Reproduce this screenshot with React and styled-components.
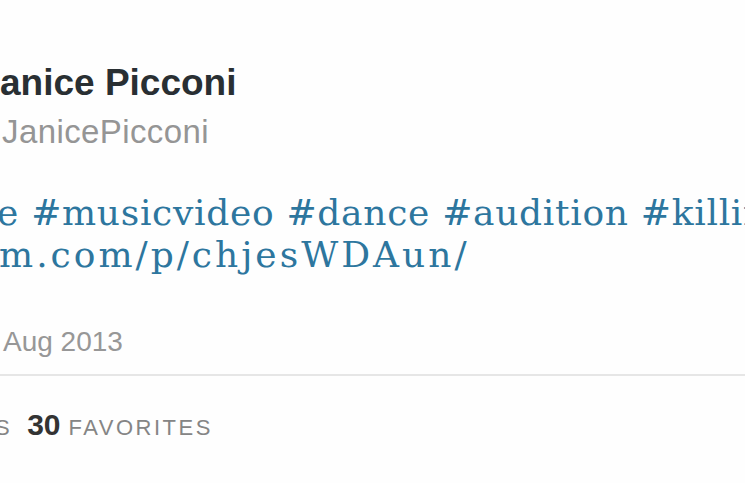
import React from "react";
import styled, { createGlobalStyle } from "styled-components";

const GlobalStyle = createGlobalStyle`
  html, body {
    margin: 0;
    padding: 0;
    background: #fefefe;
    overflow: hidden;
  }
  body {
    width: 745px;
    height: 483px;
  }
`;

const Page = styled.div`
  width: 745px;
  height: 483px;
  overflow: hidden;
  background: #fefefe;
`;

const Card = styled.div`
  margin-left: -20px;
  padding-top: 61px;
  display: flex;
  flex-direction: column;
`;

// one line of the tweet; the clipped part hangs off the left edge
const Line = styled.div`
  display: flex;
  align-items: baseline;
  white-space: nowrap;
  padding-left: ${p => p.$x + 20}px;
  margin-top: ${p => p.$gap || 0}px;
  font-family: ${p => (p.$serif ? '"DejaVu Serif", serif' : '"Liberation Sans", Arial, sans-serif')};
  font-size: ${p => p.$size}px;
  line-height: ${p => p.$lh}px;
  letter-spacing: ${p => p.$ls || 0}px;
  font-weight: ${p => (p.$bold ? 700 : 400)};
  color: ${p => p.$color};
`;

const Hidden = styled.span`
  display: inline-flex;
  justify-content: flex-end;
  width: 0;
`;

const Divider = styled.div`
  height: 2px;
  background: #e6e6e6;
  margin-top: 16px;
  width: 800px;
`;

const Count = styled.b`
  font-size: 30px;
  font-weight: 700;
  color: #333;
  margin-right: 8px;
`;

const Label = styled.span`
  font-size: 22px;
  letter-spacing: 2.5px;
  color: #858585;
  margin-right: ${p => p.$after || 0}px;
`;

const Clip = ({ text }) => (
  <Hidden>
    <span>{text}</span>
  </Hidden>
);

export default function App() {
  return (
    <Page>
      <GlobalStyle />
      <Card>
        <Line $x={0} $size={37} $lh={44} $bold $color="#292f33">
          <Clip text="J" />
          anice Picconi
        </Line>
        <Line $x={2} $size={33} $lh={40} $gap={7} $ls={0.4} $color="#959595">
          <Clip text="@" />
          JanicePicconi
        </Line>
        <Line $x={-3} $size={36} $lh={42} $gap={40} $ls={0.7} $serif $color="#2d769e">
          <Clip text="Rehearsal time for the new music video, stay tun" />
          e #musicvideo #dance #audition #killingit
        </Line>
        <Line $x={-1} $size={36} $lh={42} $ls={3} $serif $color="#2d769e">
          <Clip text="instagra" />
          m.com/p/chjesWDAun/
        </Line>
        <Line $x={3} $size={28} $lh={32} $gap={50} $color="#979797">
          <Clip text={"4:19 PM - 12\u00a0"} />
          Aug 2013
        </Line>
        <Divider />
        <Line $x={-5} $size={30} $lh={36} $gap={31} $color="#858585">
          <Clip text="" />
          <Label $after={15}>S</Label>
          <Count>30</Count>
          <Label>FAVORITES</Label>
        </Line>
      </Card>
    </Page>
  );
}
